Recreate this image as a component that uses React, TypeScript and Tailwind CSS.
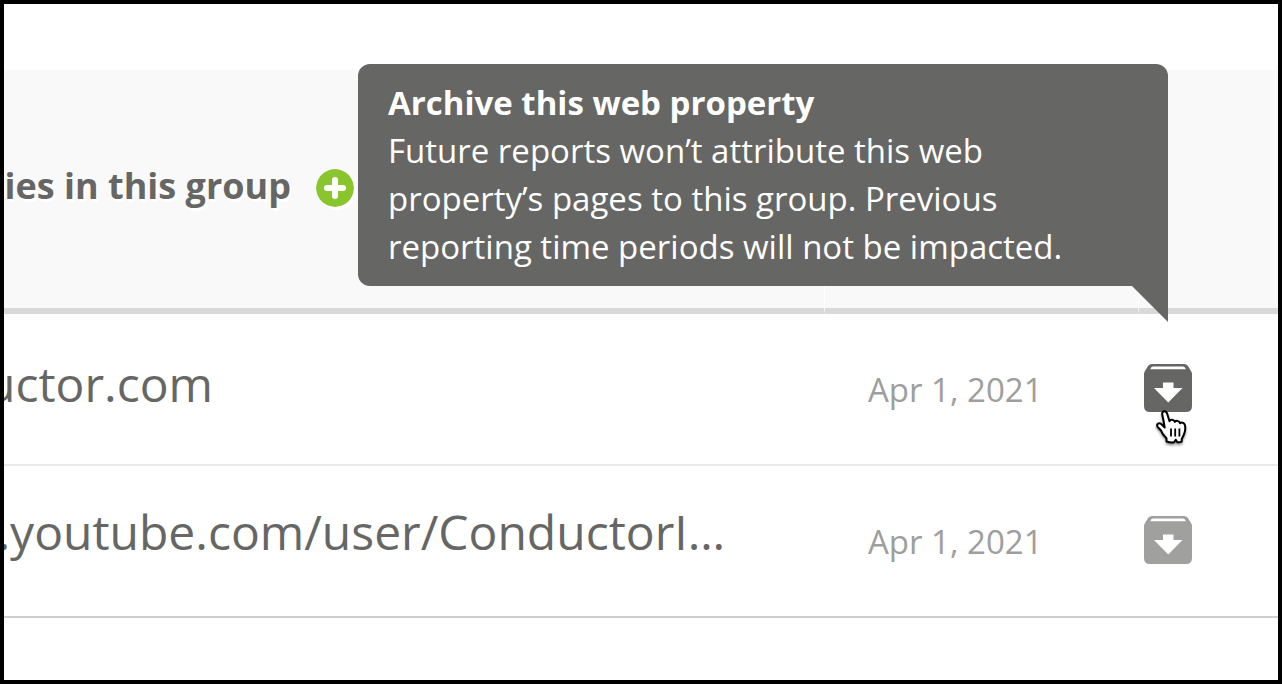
type Property = {
  url: string;
  cell: string;
  date: string;
  active?: boolean;
};

const properties: Property[] = [
  { url: 'uctor.com', cell: 'w-[209px] pb-0.5', date: 'Apr 1, 2021', active: true },
  { url: '.youtube.com/user/ConductorI…', cell: 'w-[721px] pb-2.5', date: 'Apr 1, 2021' },
];

function AddIcon() {
  return (
    <svg viewBox="0 0 38 38" className="block size-[38px] rounded-full shadow-[2px_3px_0_#fff]">
      <circle cx="19" cy="19" r="19" fill="#89c52c" />
      <path d="M19 11v16M11 19h16" stroke="#fff" strokeWidth="6" strokeLinecap="round" />
    </svg>
  );
}

function ArchiveIcon() {
  return (
    <svg viewBox="0 0 48 48" className="block size-12" fill="currentColor">
      <path
        fillRule="evenodd"
        d="M8 0h32q2.500 0 4 2l3 5q1 1.500 1 3v32q0 6-6 6H6q-6 0-6-6V10q0-1.500 1-3l3-5Q5.500 0 8 0ZM9 2.500q-2 0-2.700 2.700h35.600Q41.200 2.500 39 2.500ZM19 18.500v5.500H10l14.300 14.500L38.500 24H29.500v-5.500Z"
      />
    </svg>
  );
}

function HandCursor() {
  return (
    <svg
      viewBox="0 0 32 36"
      className="pointer-events-none absolute top-[46px] left-3 h-9 w-8 drop-shadow-[0_2px_1px_rgba(0,0,0,0.4)]"
      aria-hidden="true"
    >
      <path
        d="M10.500 31.500v-3.200L6.800 24 5 20.500 1.700 17q-1.500-2.500.6-3.500 1.500-.6 3.200.8l3.200 3.200L7.200 9 6.200 4.500Q6 1.400 8.200 1.200q2.200-.1 3 2.600l2.300 7.400q.6-1.700 2.700-1.500 2.200.2 2.600 2.200.8-1.200 2.700-1 2.200.4 2.500 2.300 1-.9 2.700-.4 2 .6 2.300 2.600l.3 2.900-.4 3.200-1.500 4.300-1.700 3.200v2.700q-2 .9-4.400.5l-1.500-2.300-1.700 2.300q-3.500.8-7.300-.7Z"
        fill="#fff"
        stroke="#000"
        strokeWidth="2"
        strokeLinejoin="round"
      />
      <path d="M15 18.500v8M19.200 18.500v8M23.400 18.500v8" stroke="#000" strokeWidth="1.800" />
    </svg>
  );
}

function Tooltip() {
  return (
    <div
      id="archive-tip"
      role="tooltip"
      className="absolute right-1/2 bottom-full mb-[78px] w-[810px] rounded-xl rounded-br-none bg-[#666664] px-[30px] py-[15px] text-left text-[33px] leading-[48px] text-white"
    >
      <strong className="block font-bold">Archive this web property</strong>
      <p className="max-w-[700px]">
        Future reports won’t attribute this web property’s pages to this group. Previous reporting time periods will not
        be impacted.
      </p>
      <svg viewBox="0 0 36 36" className="absolute top-full right-0 size-9" fill="#666664">
        <path d="M0 0h36v36Z" />
      </svg>
    </div>
  );
}

export default function App() {
  return (
    <main className="min-h-screen overflow-hidden border-4 border-black bg-white pt-[66px] font-['Open_Sans','Noto_Sans',sans-serif] text-[#666664]">
      <table className="w-full table-fixed border-separate border-spacing-0">
        <colgroup>
          <col />
          <col className="w-[314px]" />
          <col className="w-[140px]" />
        </colgroup>
        <thead>
          <tr className="h-[244px] bg-[#f9f9f9]">
            <th scope="col" className="border-b-6 border-[#d9d9d9] p-0 pb-0.5">
              <div className="flex items-center gap-[25px]">
                <span className="flex w-[287px] justify-end overflow-hidden pb-1 text-4xl leading-[56px] font-bold whitespace-nowrap [text-shadow:2px_3px_0_#fff]">
                  ies in this group
                </span>
                <button type="button" aria-label="Add web property">
                  <AddIcon />
                </button>
              </div>
            </th>
            <td className="border-b-6 border-l border-b-[#d9d9d9] border-l-white" />
            <td className="border-b-6 border-l border-b-[#d9d9d9] border-l-white" />
          </tr>
        </thead>
        <tbody>
          {properties.map((property) => (
            <tr
              key={property.url}
              className="h-[152px] *:border-b-2 *:border-[#e9e9e9] last:*:border-[#cfcfcf]"
            >
              <td className="p-0 pb-2">
                <a
                  href="#"
                  className={`flex justify-end overflow-hidden text-5xl leading-[66px] whitespace-nowrap ${property.cell}`}
                >
                  {property.url}
                </a>
              </td>
              <td className="p-0 pt-0.5 pl-11 text-[33px] leading-[48px] text-[#9e9e9d]">{property.date}</td>
              <td className="p-0 pb-0.5 pl-1.5">
                <div className="relative size-12">
                  <button
                    type="button"
                    aria-label="Archive this web property"
                    aria-describedby={property.active ? 'archive-tip' : undefined}
                    className={property.active ? 'text-[#666664]' : 'text-[#a0a09f]'}
                  >
                    <ArchiveIcon />
                  </button>
                  {property.active && <Tooltip />}
                  {property.active && <HandCursor />}
                </div>
              </td>
            </tr>
          ))}
        </tbody>
      </table>
    </main>
  );
}
